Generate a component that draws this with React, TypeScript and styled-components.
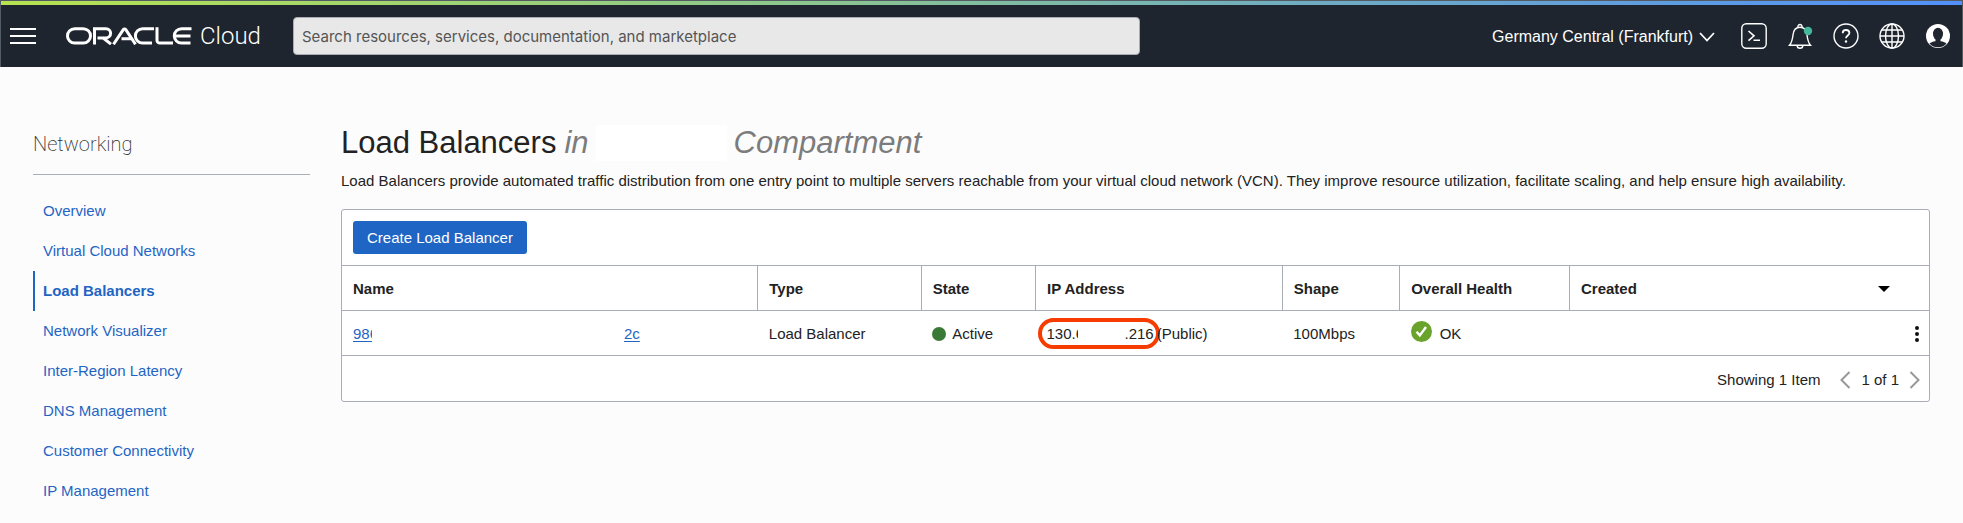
import React from "react";
import styled, { createGlobalStyle } from "styled-components";

const GlobalStyle = createGlobalStyle`
  *, *::before, *::after { box-sizing: border-box; }
  body {
    margin: 0;
    background: #fcfcfc;
    color: #222;
    font-family: "Liberation Sans", Arial, Helvetica, sans-serif;
    font-size: 15px;
    line-height: 20px;
  }
  button { font: inherit; color: inherit; cursor: pointer; }
`;

const TopBar = styled.header`
  display: flex;
  flex-direction: column;
  background: #1e252e;
  color: #fff;
  border: 1px solid #555b63;
  border-bottom: 0;
`;

const AccentStripe = styled.div`
  height: 4px;
  background: linear-gradient(90deg, #b7e350, #8cc68f 41%, #70adc0 66%, #5190fb);
`;

const TopRow = styled.div`
  display: flex;
  align-items: center;
  height: 62px;
  padding: 0 11px 0 9px;
`;

const IconButton = styled.button`
  display: flex;
  padding: 0;
  border: 0;
  background: none;
`;

const BrandLink = styled.a`
  display: flex;
  align-items: center;
  gap: 8px;
  width: 227px;
  margin-left: 30px;
  color: #fff;
  text-decoration: none;
  font-family: Roboto, sans-serif;
  font-size: 24px;
  font-weight: 300;
  line-height: 30px;
`;

const SearchInput = styled.input`
  flex: 0 1 847px;
  min-width: 100px;
  height: 38px;
  padding: 0 8px;
  border: 1px solid #a9adb3;
  border-radius: 4px;
  background: #e8e8e8;
  color: #555;
  font: 15px/20px Inter, sans-serif;
  &::placeholder { color: #555; opacity: 1; }
`;

const Tools = styled.div`
  display: flex;
  align-items: center;
  gap: 20px;
  margin-left: auto;
`;

const RegionButton = styled.button`
  display: flex;
  align-items: center;
  gap: 6px;
  margin-right: 6px;
  padding: 2px 0 0;
  border: 0;
  background: none;
  font-size: 16px;
  white-space: nowrap;
`;

const Body = styled.div`
  display: flex;
  gap: 31px;
  padding: 57px 33px 0;
`;

const Sidebar = styled.nav`
  flex: 0 0 277px;
`;

const SidebarTitle = styled.h2`
  margin: 0 0 16px;
  padding: 5px 0 15px;
  border-bottom: 1px solid #a9adb5;
  color: #333;
  font: 200 20px/30px Roboto, sans-serif;
`;

const NavList = styled.ul`
  margin: 0;
  padding: 0;
  list-style: none;
`;

const NavLink = styled.a<{ $active?: boolean }>`
  display: flex;
  align-items: center;
  height: 40px;
  padding-left: 8px;
  border-left: 2px solid ${(p) => (p.$active ? "#1f65c4" : "transparent")};
  color: #1f65c4;
  font-weight: ${(p) => (p.$active ? 700 : 400)};
  text-decoration: none;
`;

const Main = styled.main`
  flex: 1;
  min-width: 0;
`;

const Title = styled.h1`
  display: flex;
  align-items: center;
  margin: 0;
  font-size: 31px;
  font-weight: 400;
  line-height: 38px;
`;

const Scope = styled.em`
  display: flex;
  align-items: center;
  gap: 7px;
  margin-left: 8px;
  color: #7c7c7c;
`;

const Redacted = styled.span<{ $width: number; $height?: number }>`
  display: inline-block;
  width: ${(p) => p.$width}px;
  height: ${(p) => p.$height ?? 20}px;
  background: #fff;
`;

const Intro = styled.p`
  margin: 9px 0 18px;
`;

const Panel = styled.section`
  border: 1px solid #a9adb5;
  border-radius: 3px;
  background: #fff;
`;

const ActionBar = styled.div`
  display: flex;
  align-items: center;
  height: 55px;
  padding: 0 11px;
`;

const PrimaryButton = styled.button`
  height: 33px;
  padding: 1px 14px 0;
  border: 0;
  border-radius: 3px;
  background: #1f65c4;
  color: #fff;
`;

const Table = styled.table`
  width: 100%;
  table-layout: fixed;
  border-collapse: collapse;
  border-top: 1px solid #a9adb5;
  border-bottom: 1px solid #a9adb5;
`;

const HeadCell = styled.th<{ $share: number }>`
  width: ${(p) => p.$share}%;
  height: 45px;
  padding: 2px 11px 0;
  border-bottom: 1px solid #a9adb5;
  text-align: left;
  & + & { border-left: 1px solid #a9adb5; }
`;

const Cell = styled.td`
  height: 45px;
  padding: 2px 11px 0;
  white-space: nowrap;
`;

const CellRow = styled.div<{ $gap?: number; $spread?: boolean }>`
  display: flex;
  align-items: center;
  justify-content: ${(p) => (p.$spread ? "space-between" : "flex-start")};
  gap: ${(p) => p.$gap ?? 0}px;
`;

const SortButton = styled(IconButton)`
  margin-right: 28px;
`;

const RowMenu = styled(IconButton)`
  margin-left: auto;
  margin-right: -1px;
`;

const NameLink = styled.a`
  max-width: 19px;
  overflow: hidden;
  color: #1f65c4;
  text-underline-offset: 2px;
`;

const StatusDot = styled.span`
  width: 14px;
  height: 14px;
  border-radius: 50%;
  background: #3a7a36;
`;

const HealthIcon = styled.span`
  display: flex;
  padding-bottom: 5px;
`;

const Highlight = styled.span`
  display: flex;
  align-items: center;
  height: 31px;
  margin: -2px -3px 0 -9px;
  padding: 2px 2px 0 5px;
  border: 4px solid #f63c00;
  border-radius: 16px;
`;

const AddressStart = styled.span`
  width: 31px;
  overflow: hidden;
`;

const Pager = styled.footer`
  display: flex;
  align-items: center;
  justify-content: flex-end;
  gap: 10px;
  height: 45px;
  padding: 2px 9px 0;
`;

const PagerCount = styled.span`
  margin-right: 10px;
`;

const navItems = [
  "Overview",
  "Virtual Cloud Networks",
  "Load Balancers",
  "Network Visualizer",
  "Inter-Region Latency",
  "DNS Management",
  "Customer Connectivity",
  "IP Management",
];

const columns = [
  { label: "Name", share: 26.2 },
  { label: "Type", share: 10.3 },
  { label: "State", share: 7.2 },
  { label: "IP Address", share: 15.55 },
  { label: "Shape", share: 7.4 },
  { label: "Overall Health", share: 10.7 },
];

const OracleMark = () => (
  <svg width="126" height="18" viewBox="0 0 126 18" fill="none" stroke="#fff" strokeWidth="3" aria-label="Oracle">
    <rect x="1.5" y="1.7" width="23" height="14.4" rx="7.2" />
    <path d="M28.5 17.6V1.7H40a4.6 4.6 0 0 1 0 9.2H31.5M36.5 10.5l8.500 6.600" />
    <path d="M47.500 17.300 57.300 2.600a1.500 1.500 0 0 1 2.500 0l9.700 14.700M55.500 11.800h10" />
    <path d="M88 1.700H76.600a7.200 7.200 0 0 0 0 14.400H86" />
    <path d="M91 .2v13.200a2.700 2.700 0 0 0 2.700 2.700H107" />
    <path d="M125.500 1.700h-10a7.200 7.200 0 0 0 0 14.400h9M109 8.900h15.500" />
  </svg>
);

const MenuIcon = () => (
  <svg width="26" height="16" viewBox="0 0 26 16" stroke="#fff" strokeWidth="2">
    <path d="M0 1h26M0 8h26M0 15h26" />
  </svg>
);

const ChevronDownIcon = () => (
  <svg width="16" height="10" viewBox="0 0 16 10" fill="none" stroke="#fff" strokeWidth="1.8">
    <path d="m1 1 7 7.500L15 1" />
  </svg>
);

const ConsoleIcon = () => (
  <svg width="26" height="26" viewBox="0 0 26 26" fill="none" stroke="#fff" strokeWidth="1.400">
    <rect x=".8" y=".8" width="24.400" height="24.400" rx="4.500" />
    <path d="m7.500 8 5.500 4.800-5.500 4.800M12.500 17.300h6.500" strokeWidth="1.600" />
  </svg>
);

const BellIcon = () => (
  <svg width="26" height="26" viewBox="0 0 26 26" fill="none" stroke="#fff" strokeWidth="1.400">
    <path d="M2.500 22.300h21c-2-2.300-2.900-5.200-3.500-10.300-.5-4.700-3-7.700-7-7.700s-6.500 3-7 7.700c-.6 5.100-1.500 8-3.500 10.300ZM11 4.300a2.100 2.100 0 1 1 4 0M10.200 22.500a2.800 2.800 0 0 0 5.600 0" />
    <circle cx="21" cy="8" r="4.200" fill="#45b89b" stroke="none" />
  </svg>
);

const HelpIcon = () => (
  <svg width="26" height="26" viewBox="0 0 26 26" fill="none" stroke="#fff" strokeWidth="1.400">
    <circle cx="13" cy="13" r="12" />
    <path d="M9.700 10.200c0-2 1.400-3.200 3.300-3.200s3.400 1.200 3.400 3c0 2.400-3.400 2.600-3.400 5.200" strokeWidth="1.800" />
    <circle cx="13" cy="18.500" r="1.200" fill="#fff" stroke="none" />
  </svg>
);

const GlobeIcon = () => (
  <svg width="26" height="26" viewBox="0 0 26 26" fill="none" stroke="#fff" strokeWidth="1.400">
    <circle cx="13" cy="13" r="12" />
    <ellipse cx="13" cy="13" rx="6.500" ry="12" />
    <path d="M13 1v24M1 13h24M3 7h20M3 19h20" />
  </svg>
);

const ProfileIcon = () => (
  <svg width="26" height="26" viewBox="0 0 26 26">
    <circle cx="13" cy="13" r="12" fill="#fff" />
    <ellipse cx="13" cy="11" rx="5" ry="6.200" fill="#1e252e" />
    <path d="M10.500 15h5v3.200c3 .4 4.800 1.200 6 2.300a11.300 11.300 0 0 1-17 0c1.200-1.100 3-1.900 6-2.300Z" fill="#1e252e" />
  </svg>
);

const CheckIcon = () => (
  <svg width="21" height="21" viewBox="0 0 21 21">
    <circle cx="10.500" cy="10.500" r="10.500" fill="#6aa32b" />
    <path d="m5.500 10.800 3.300 3.600L15 6" fill="none" stroke="#fff" strokeWidth="2.400" />
  </svg>
);

const SortIcon = () => (
  <svg width="12" height="6" viewBox="0 0 12 6">
    <path d="M0 0h12L6 6Z" fill="#000" />
  </svg>
);

const KebabIcon = () => (
  <svg width="4" height="16" viewBox="0 0 4 16" fill="#111">
    <circle cx="2" cy="2" r="2" />
    <circle cx="2" cy="8" r="2" />
    <circle cx="2" cy="14" r="2" />
  </svg>
);

const PageIcon = ({ next }: { next?: boolean }) => (
  <svg width="11" height="18" viewBox="0 0 11 18" fill="none" stroke="#999" strokeWidth="2">
    <path d={next ? "m1.500 1 8 8-8 8" : "m9.500 1-8 8 8 8"} />
  </svg>
);

export default function App() {
  return (
    <>
      <GlobalStyle />
      <TopBar>
        <AccentStripe />
        <TopRow>
          <IconButton aria-label="Open navigation menu"><MenuIcon /></IconButton>
          <BrandLink href="#home"><OracleMark />Cloud</BrandLink>
          <SearchInput
            type="search"
            aria-label="Search"
            placeholder="Search resources, services, documentation, and marketplace"
          />
          <Tools>
            <RegionButton>Germany Central (Frankfurt)<ChevronDownIcon /></RegionButton>
            <IconButton aria-label="Developer tools"><ConsoleIcon /></IconButton>
            <IconButton aria-label="Announcements"><BellIcon /></IconButton>
            <IconButton aria-label="Help"><HelpIcon /></IconButton>
            <IconButton aria-label="Language"><GlobeIcon /></IconButton>
            <IconButton aria-label="Profile"><ProfileIcon /></IconButton>
          </Tools>
        </TopRow>
      </TopBar>
      <Body>
        <Sidebar aria-label="Networking">
          <SidebarTitle>Networking</SidebarTitle>
          <NavList>
            {navItems.map((item) => (
              <li key={item}>
                <NavLink href="#nav" $active={item === "Load Balancers"}>{item}</NavLink>
              </li>
            ))}
          </NavList>
        </Sidebar>
        <Main>
          <Title>
            Load Balancers
            <Scope>in<Redacted $width={131} $height={36} />Compartment</Scope>
          </Title>
          <Intro>
            Load Balancers provide automated traffic distribution from one entry point to multiple servers reachable from
            your virtual cloud network (VCN). They improve resource utilization, facilitate scaling, and help ensure high
            availability.
          </Intro>
          <Panel>
            <ActionBar><PrimaryButton>Create Load Balancer</PrimaryButton></ActionBar>
            <Table>
              <thead>
                <tr>
                  {columns.map((c) => (
                    <HeadCell key={c.label} $share={c.share}>{c.label}</HeadCell>
                  ))}
                  <HeadCell $share={22.65}>
                    <CellRow $spread>
                      Created
                      <SortButton aria-label="Sort by created"><SortIcon /></SortButton>
                    </CellRow>
                  </HeadCell>
                </tr>
              </thead>
              <tbody>
                <tr>
                  <Cell>
                    <CellRow>
                      <NameLink href="#lb">986</NameLink>
                      <Redacted $width={252} />
                      <NameLink href="#lb">2c</NameLink>
                    </CellRow>
                  </Cell>
                  <Cell>Load Balancer</Cell>
                  <Cell><CellRow $gap={6}><StatusDot />Active</CellRow></Cell>
                  <Cell>
                    <CellRow>
                      <Highlight><AddressStart>130.6</AddressStart><Redacted $width={47} />.216</Highlight>
                      (Public)
                    </CellRow>
                  </Cell>
                  <Cell>100Mbps</Cell>
                  <Cell><CellRow $gap={8}><HealthIcon><CheckIcon /></HealthIcon>OK</CellRow></Cell>
                  <Cell><CellRow><RowMenu aria-label="Actions"><KebabIcon /></RowMenu></CellRow></Cell>
                </tr>
              </tbody>
            </Table>
            <Pager>
              <PagerCount>Showing 1 Item</PagerCount>
              <IconButton aria-label="Previous page"><PageIcon /></IconButton>
              <span>1 of 1</span>
              <IconButton aria-label="Next page"><PageIcon next /></IconButton>
            </Pager>
          </Panel>
        </Main>
      </Body>
    </>
  );
}
